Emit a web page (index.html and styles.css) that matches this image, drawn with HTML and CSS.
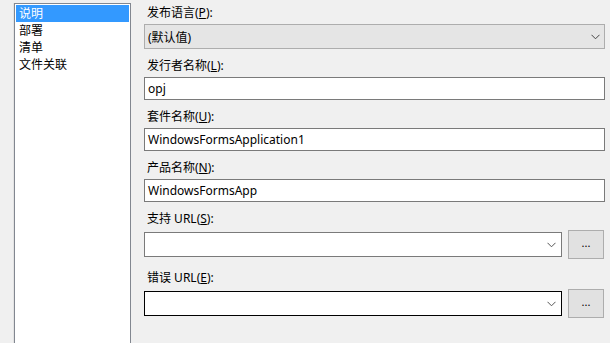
FILE: index.html
```html
<!DOCTYPE html>
<html>
<head>
    <title>说明</title>
    <link rel="stylesheet" href="styles.css">
</head>
<body>
    <div class="page-list">
        <div class="list-item selected">说明</div>
        <div class="list-item">部署</div>
        <div class="list-item">清单</div>
        <div class="list-item">文件关联</div>
    </div>

    <div class="props">
        <div class="group first">
            <div class="label">发布语言(<u>P</u>):</div>
            <div class="combo readonly">
                <span>(默认值)</span>
                <svg class="chevron" width="9" height="6" viewBox="0 0 9 6"><path d="M0.5 0.8 L4.5 4.8 L8.5 0.8" fill="none" stroke="#444" stroke-width="1"/></svg>
            </div>
        </div>

        <div class="group">
            <div class="label">发行者名称(<u>L</u>):</div>
            <div class="textbox">opj</div>
        </div>

        <div class="group">
            <div class="label">套件名称(<u>U</u>):</div>
            <div class="textbox">WindowsFormsApplication1</div>
        </div>

        <div class="group">
            <div class="label">产品名称(<u>N</u>):</div>
            <div class="textbox">WindowsFormsApp</div>
        </div>

        <div class="group">
            <div class="label">支持 URL(<u>S</u>):</div>
            <div class="combo-row">
                <div class="combo editable">
                    <span></span>
                    <svg class="chevron" width="9" height="6" viewBox="0 0 9 6"><path d="M0.5 0.8 L4.5 4.8 L8.5 0.8" fill="none" stroke="#555" stroke-width="1"/></svg>
                </div>
                <button class="browse">...</button>
            </div>
        </div>

        <div class="group last">
            <div class="label">错误 URL(<u>E</u>):</div>
            <div class="combo-row">
                <div class="combo editable focused">
                    <span></span>
                    <svg class="chevron" width="9" height="6" viewBox="0 0 9 6"><path d="M0.5 0.8 L4.5 4.8 L8.5 0.8" fill="none" stroke="#555" stroke-width="1"/></svg>
                </div>
                <button class="browse">...</button>
            </div>
        </div>
    </div>
</body>
</html>
```

FILE: styles.css
```css
html {
    overflow: hidden;
}

body {
    margin: 0;
    background: #f0f0f0;
    font-family: 'Segoe UI', 'Noto Sans', 'Noto Sans CJK SC', sans-serif;
    font-size: 12px;
    color: #000;
    display: flex;
    align-items: flex-start;
    height: 343px;
    overflow: hidden;
}

.page-list {
    margin: 3px 0 0 14px;
    width: 117px;
    height: 340px;
    padding: 1px;
    background: #fff;
    border: 1px solid #828790;
    border-bottom: none;
    box-shadow: -1px 0 0 #e3e3e3;
    box-sizing: border-box;
}

.list-item {
    height: 17px;
    line-height: 17px;
    padding-left: 3px;
}

.list-item.selected {
    background: #3399ff;
    color: white;
}

.props {
    margin-left: 13px;
    width: 461px;
    display: flex;
    flex-direction: column;
}

.group {
    margin-top: 9px;
}

.group.first {
    margin-top: 5px;
}

.group.last {
    margin-top: 11px;
}

.label {
    height: 16px;
    line-height: 16px;
    padding-left: 3px;
    margin-bottom: 3px;
    white-space: nowrap;
}

.textbox {
    height: 23px;
    line-height: 21px;
    padding-left: 3px;
    background: #fff;
    border: 1px solid #7a7a7a;
    box-sizing: border-box;
}

.combo {
    height: 25px;
    display: flex;
    align-items: center;
    justify-content: space-between;
    padding: 0 4px 0 3px;
    border: 1px solid #adadad;
    box-sizing: border-box;
}

.combo.readonly {
    background: #e5e5e5;
}

.combo.editable {
    flex: 1;
    padding-right: 5px;
    background: #fff;
    border-color: #7a7a7a;
}

.combo.focused {
    border-color: #000;
}

.chevron {
    display: block;
}

.combo-row {
    display: flex;
    align-items: center;
    gap: 6px;
    height: 29px;
    padding-right: 1px;
}

.browse {
    width: 36px;
    height: 29px;
    margin: 0;
    padding: 0 0 4px 0;
    border: 1px solid #adadad;
    background: #e1e1e1;
    font-family: 'Segoe UI', 'Noto Sans', sans-serif;
    font-size: 11px;
    line-height: 1;
    color: #000;
    box-sizing: border-box;
}
```
